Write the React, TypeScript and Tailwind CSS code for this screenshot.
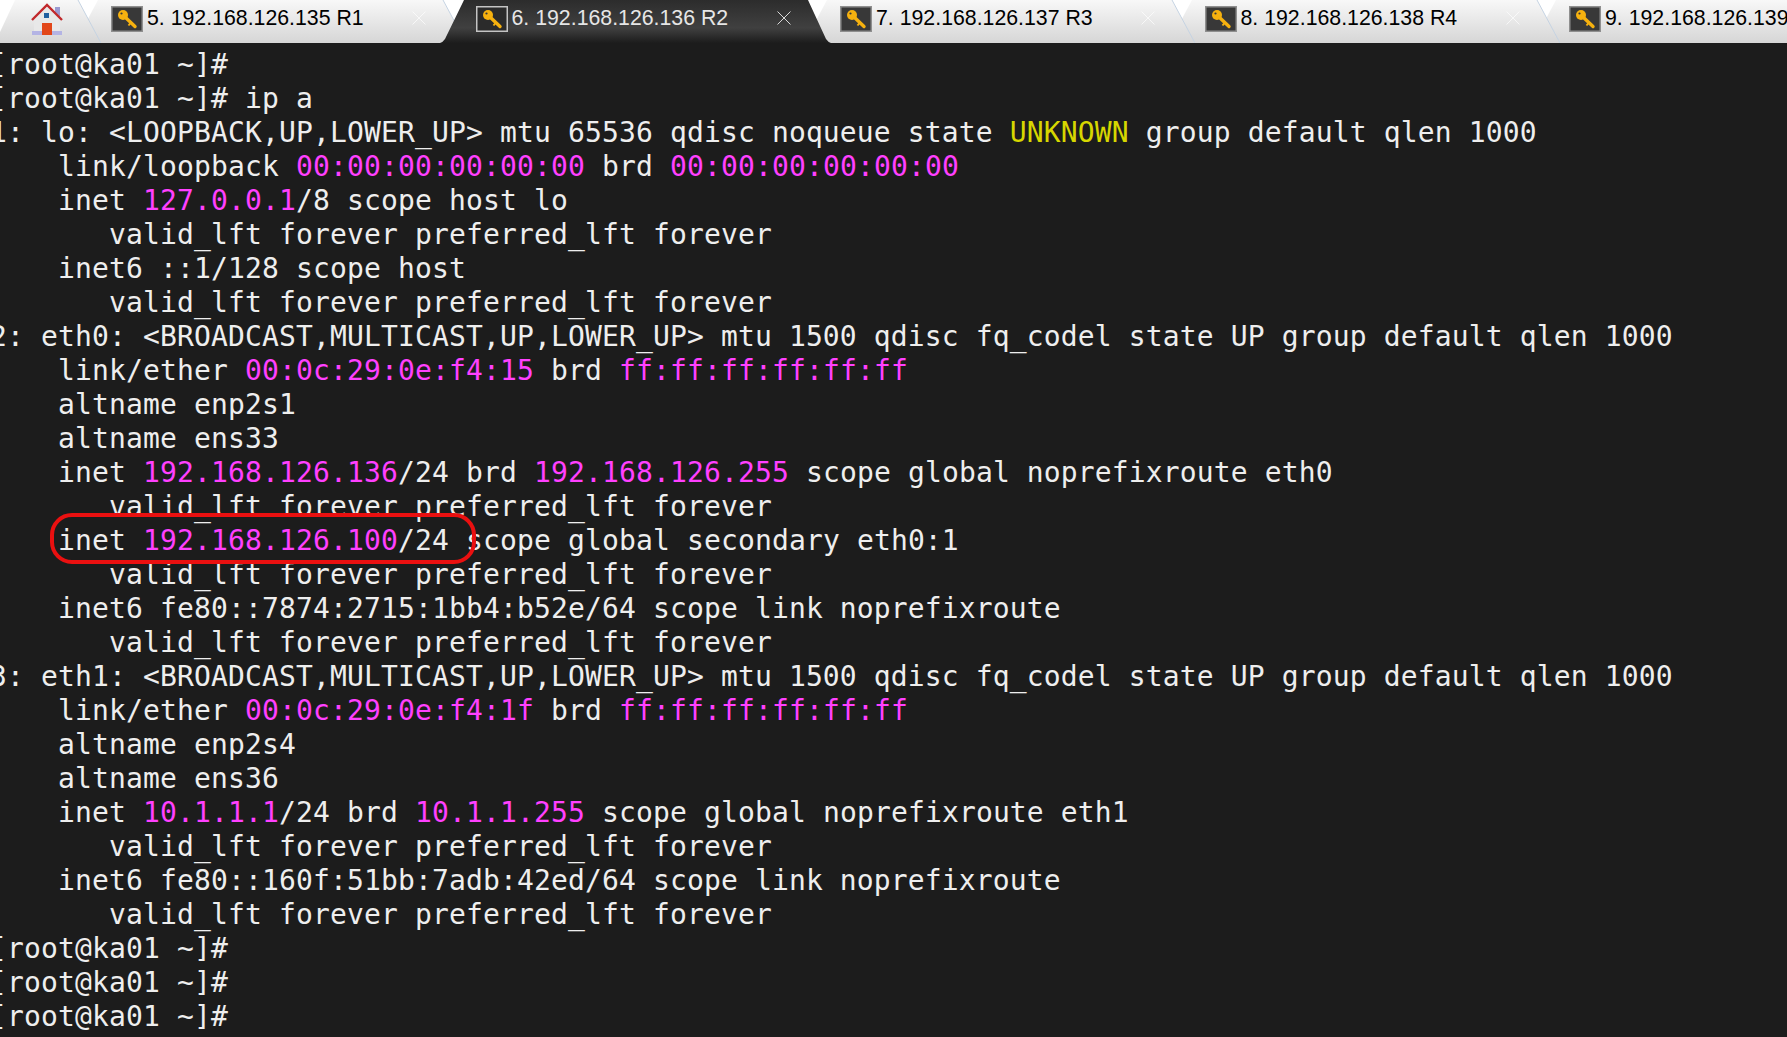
import React from "react";

const M = ({ children }: { children: React.ReactNode }) => <span className="text-[#ff40ff]">{children}</span>;
const Y = ({ children }: { children: React.ReactNode }) => <span className="text-[#d7d700]">{children}</span>;

function KeyIcon({ active }: { active?: boolean }) {
  return (
    <svg width="32" height="26" viewBox="0 0 32 26" className="shrink-0">
      <rect x="0.75" y="0.75" width="30.5" height="24.5" fill={active ? "#2b2b2b" : "#383838"} stroke={active ? "#c4c4c4" : "#8f8f8f"} strokeWidth="1.5" />
      <circle cx="12" cy="9" r="5" fill="#f6b10f" />
      <circle cx="10.5" cy="7.5" r="1.1" fill="#383838" />
      <path d="M14 11 L24 20.5" fill="none" stroke="#f6b10f" strokeWidth="3.4" strokeLinecap="round" />
      <path d="M19.5 17 L17.5 19.5" fill="none" stroke="#f6b10f" strokeWidth="2" />
    </svg>
  );
}

function TabShape({ active }: { active?: boolean }) {
  const id = active ? "tabActive" : "tabIdle";
  return (
    <svg width="391" height="43" viewBox="0 0 391 43" className="absolute left-0 top-0">
      <defs>
        <linearGradient id={id} x1="0" y1="0" x2="0" y2="1">
          {active ? (
            <>
              <stop offset="0" stopColor="#2c2c2c" />
              <stop offset="0.65" stopColor="#404040" />
              <stop offset="1" stopColor="#1c1c1c" />
            </>
          ) : (
            <>
              <stop offset="0" stopColor="#f8f8f8" />
              <stop offset="1" stopColor="#d6d6d6" />
            </>
          )}
        </linearGradient>
      </defs>
      <path d={active ? "M0 43 Q3 42 5 39 L24 0 L368 0 L386 39 Q388 42 391 43 Z" : "M0 43 L23 0 L368 0 L391 43 Z"} fill={`url(#${id})`} />
      {!active && <path d="M368 0 L391 43" fill="none" stroke="#c5d3e2" strokeWidth="1" />}
    </svg>
  );
}

function Tab({ label, active, z }: { label: string; active?: boolean; z: string }) {
  return (
    <div className={`relative ${z} -mr-[26.5px] h-[43px] w-[391px] shrink-0`}>
      <TabShape active={active} />
      <div className="relative flex h-[43px] items-start pl-[36px] pt-[6px]">
        <KeyIcon active={active} />
        <span className={`ml-[4px] text-[21.3px] leading-[25px] whitespace-nowrap ${active ? "text-[#e6e6e6]" : "text-black"}`}>{label}</span>
        <span className={`absolute right-[39px] top-[10px] ${active ? "" : "opacity-70"}`}>
          <svg width="16" height="16" viewBox="0 0 16 16">
            <path d="M1.5 1.5 L14.5 14.5 M14.5 1.5 L1.5 14.5" stroke={active ? "#d8d8d8" : "#ffffff"} strokeWidth="1" fill="none" />
          </svg>
        </span>
      </div>
    </div>
  );
}

function HomeTab() {
  return (
    <div className="relative z-50 -mr-[26px] h-[43px] w-[101px] shrink-0">
      <svg width="101" height="43" viewBox="0 0 101 43" className="absolute left-0 top-0">
        <defs>
          <linearGradient id="tabHome" x1="0" y1="0" x2="0" y2="1">
            <stop offset="0" stopColor="#f8f8f8" />
            <stop offset="1" stopColor="#d6d6d6" />
          </linearGradient>
        </defs>
        <path d="M0 32 L15 0 L78 0 L101 43 L0 43 Z" fill="url(#tabHome)" />
        <path d="M78 0 L101 43" fill="none" stroke="#c5d3e2" strokeWidth="1" />
      </svg>
      <svg width="34" height="33" viewBox="0 0 34 33" className="absolute left-[31px] top-[3px]">
        <path d="M24 4 h5 v10 l-5 -5 Z" fill="#9a9ad0" />
        <path d="M3 17 L16 4 L29 17 V30 H3 Z" fill="#e8e8e8" />
        <path d="M1 17 L16 2 L31 17" fill="none" stroke="#c0282b" strokeWidth="2.4" />
        <rect x="13" y="10" width="5" height="5" fill="#1f5f9f" />
        <rect x="1" y="28" width="30" height="4" fill="#b4b4e4" />
        <rect x="11" y="20" width="10" height="12" fill="#e2471a" />
      </svg>
    </div>
  );
}

const lines: React.ReactNode[] = [
  "[root@ka01 ~]#",
  "[root@ka01 ~]# ip a",
  <>1: lo: &lt;LOOPBACK,UP,LOWER_UP&gt; mtu 65536 qdisc noqueue state <Y>UNKNOWN</Y> group default qlen 1000</>,
  <>    link/loopback <M>00:00:00:00:00:00</M> brd <M>00:00:00:00:00:00</M></>,
  <>    inet <M>127.0.0.1</M>/8 scope host lo</>,
  "       valid_lft forever preferred_lft forever",
  "    inet6 ::1/128 scope host",
  "       valid_lft forever preferred_lft forever",
  "2: eth0: <BROADCAST,MULTICAST,UP,LOWER_UP> mtu 1500 qdisc fq_codel state UP group default qlen 1000",
  <>    link/ether <M>00:0c:29:0e:f4:15</M> brd <M>ff:ff:ff:ff:ff:ff</M></>,
  "    altname enp2s1",
  "    altname ens33",
  <>    inet <M>192.168.126.136</M>/24 brd <M>192.168.126.255</M> scope global noprefixroute eth0</>,
  "       valid_lft forever preferred_lft forever",
  <>    inet <M>192.168.126.100</M>/24 scope global secondary eth0:1</>,
  "       valid_lft forever preferred_lft forever",
  "    inet6 fe80::7874:2715:1bb4:b52e/64 scope link noprefixroute",
  "       valid_lft forever preferred_lft forever",
  "3: eth1: <BROADCAST,MULTICAST,UP,LOWER_UP> mtu 1500 qdisc fq_codel state UP group default qlen 1000",
  <>    link/ether <M>00:0c:29:0e:f4:1f</M> brd <M>ff:ff:ff:ff:ff:ff</M></>,
  "    altname enp2s4",
  "    altname ens36",
  <>    inet <M>10.1.1.1</M>/24 brd <M>10.1.1.255</M> scope global noprefixroute eth1</>,
  "       valid_lft forever preferred_lft forever",
  "    inet6 fe80::160f:51bb:7adb:42ed/64 scope link noprefixroute",
  "       valid_lft forever preferred_lft forever",
  "[root@ka01 ~]#",
  "[root@ka01 ~]#",
  "[root@ka01 ~]#",
];

export default function App() {
  return (
    <div className="flex h-[1037px] w-[1787px] flex-col overflow-hidden bg-[#1c1c1c] font-['Liberation_Sans',sans-serif]">
      <div className="flex h-[43px] shrink-0 overflow-hidden bg-white">
        <HomeTab />
        <Tab z="z-40" label="5. 192.168.126.135 R1" />
        <Tab z="z-[60]" label="6. 192.168.126.136 R2" active />
        <Tab z="z-30" label="7. 192.168.126.137 R3" />
        <Tab z="z-20" label="8. 192.168.126.138 R4" />
        <Tab z="z-10" label="9. 192.168.126.139 R5" />
      </div>
      <div className="relative -ml-[10px] flex-1 whitespace-pre pt-[5px] font-['DejaVu_Sans_Mono',monospace] text-[28px] leading-[34px] tracking-[0.14px] text-[#eeeeee]">
        {lines.map((l, i) => (
          <div key={i} className="h-[34px]">{l}</div>
        ))}
        <div className="absolute left-[60px] top-[470px] h-[51px] w-[426px] rounded-[22px] border-[4px] border-[#ea1010]" />
      </div>
    </div>
  );
}
